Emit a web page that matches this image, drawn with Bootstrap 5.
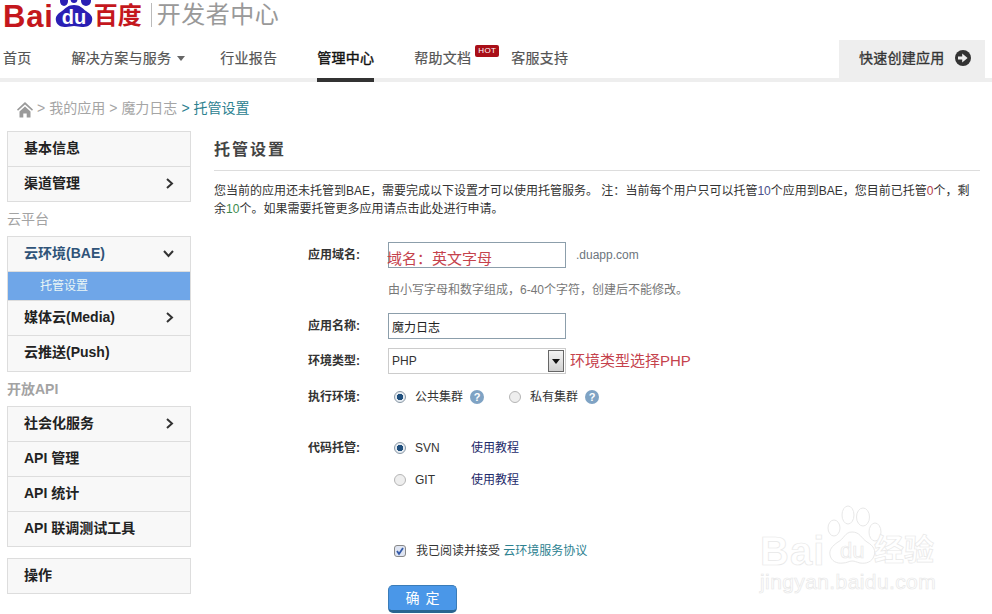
<!DOCTYPE html>
<html lang="zh-CN">
<head>
<meta charset="UTF-8" />
<title>托管设置</title>
<link href="https://cdn.jsdelivr.net/npm/bootstrap@5.3.0/dist/css/bootstrap.min.css" rel="stylesheet" />
<style>
  body { font-family: "Liberation Sans", "Noto Sans CJK SC", sans-serif; font-size: 12px; color: #333; background: #fff; height: 614px; overflow: hidden; }
  .page-wrap { position: relative; height: 614px; overflow: hidden; }

  /* header */
  .logo-row { height: 38px; padding-left: 3px; overflow: hidden; }
  .logo-bai { font-size: 31px; font-weight: 700; color: #c4171d; line-height: 30px; letter-spacing: .8px; margin-top: 2px; }
  .logo-paw { flex: none; margin-left: 1px; }
  .logo-bd { font-size: 24px; font-weight: 700; color: #c4171d; line-height: 30px; margin-top: 1px; }
  .logo-sep { width: 1px; height: 24px; background: #bbb; margin: 3px 5px 0 9px; }
  .logo-title { font-size: 24px; color: #999; line-height: 30px; letter-spacing: .5px; }
  .top-nav { height: 44px; border-bottom: 4px solid #eee; padding-left: 3px; }
  .top-link { position: relative; display: block; height: 44px; margin-right: 40px; padding-top: 10px; font-size: 14px; line-height: 20px; letter-spacing: .25px; color: #555; text-decoration: none; -webkit-text-stroke: .2px; }
  .top-link.on { color: #111; border-bottom: 4px solid #333; -webkit-text-stroke: .4px; }
  .top-caret { display: inline-block; margin-left: 6px; margin-right: -5px; vertical-align: 2px; border-top: 5px solid #666; border-left: 4.5px solid transparent; border-right: 4.5px solid transparent; }
  .hot-tag { position: absolute; left: 61px; top: 7px; width: 24px; height: 12px; background: #a90f18; border-radius: 2px; color: #fff; font-size: 8px; line-height: 12px; text-align: center; letter-spacing: .3px; -webkit-text-stroke: 0; }
  .quick-btn { width: 146px; height: 42px; margin-top: 2px; margin-right: 7px; padding: 0 0 6px 20px; background: #eee; color: #333; font-size: 14px; letter-spacing: .25px; gap: 10px; text-decoration: none; -webkit-text-stroke: .3px; }
  .crumbs { height: 49px; padding: 15px 0 0 17px; font-size: 14px; line-height: 22px; color: #a5a5a5; gap: 4px; }
  .crumb-now { color: #2c8190; }

  /* sidebar */
  .side-col { width: 184px; margin-left: 7px; flex: none; }
  .side-group { border-radius: 0; --bs-list-group-border-color: #ddd; --bs-list-group-bg: #f8f8f8; }
  .side-item { height: 35px; padding: 0 16px 2px; font-size: 14px; font-weight: 700; color: #222; }
  .side-item:first-child, .side-item.tail { height: 36px; }
  .side-item.open { color: #2f5378; }
  .side-sub { height: 29px; padding: 0 0 0 32px; background: #6fa6e8; color: #eaf6f6; font-size: 12px; }
  .side-head { height: 34px; font-size: 14px; line-height: 34px; color: #a3a3a3; }
  .side-head b { font-weight: 700; }
  .side-last { margin-top: 11px; }

  /* content */
  .main-col { width: 766px; margin-left: 23px; flex: none; }
  .main-title { height: 40px; margin: 0; font-size: 16px; font-weight: 700; line-height: 38px; letter-spacing: 2px; color: #444; border-bottom: 1px solid #ddd; }
  .main-intro { margin: 11px 0 24px; line-height: 18px; color: #333; }
  .zh-tc { font-family: "Liberation Sans", "Noto Sans CJK TC", sans-serif; }
  .c-blue { color: #4a4f8a; } .c-red { color: #b5404a; } .c-green { color: #3c8a4c; }
  .form-line { display: flex; align-items: center; padding-left: 94px; }
  .line-hint { margin-top: 12px; height: 20px; color: #777; }
  .line-name { margin-top: 13px; }
  .line-type { margin-top: 9px; }
  .line-run { margin-top: 14px; height: 18px; }
  .line-svn { margin-top: 33px; height: 18px; }
  .line-git { margin-top: 14px; height: 18px; }
  .line-agree { margin-top: 53px; height: 18px; }
  .line-ok { margin-top: 25px; }
  .form-name { width: 80px; flex: none; font-weight: 700; color: #333; }
  .txt-box { width: 178px; height: 26px; padding: 0 3px; border: 1px solid #8c9eab; border-radius: 0; font-size: 12px; color: #222; font-family: inherit; }
  .sel-box { width: 178px; height: 26px; padding: 0 3px; border: 1px solid #ccc; border-radius: 0; font-size: 12px; color: #333; font-family: inherit; background-position: right 1px center; background-size: 16px 22px;
    background-image: url("data:image/svg+xml,%3Csvg xmlns='http://www.w3.org/2000/svg' width='16' height='22'%3E%3Cdefs%3E%3ClinearGradient id='g' x2='0' y2='1'%3E%3Cstop stop-color='%23f4f4f4'/%3E%3Cstop offset='1' stop-color='%23cfcfcf'/%3E%3C/linearGradient%3E%3C/defs%3E%3Crect x='.5' y='.5' width='15' height='21' fill='url(%23g)' stroke='%23666'/%3E%3Cpath d='M4 9h8l-4 5z' fill='%23111'/%3E%3C/svg%3E"); }
  .box-wrap { position: relative; }
  .red-note { color: #c5424c; font-size: 15px; font-family: "Liberation Sans", "Noto Sans CJK TC", sans-serif; }
  .box-note { position: absolute; left: -1px; top: 7px; line-height: 20px; white-space: nowrap; }
  .dom-tail { margin-left: 10px; color: #6c757d; }
  .radio-dot { width: 12px; height: 12px; margin: 0 0 0 6px; border: 1px solid #b5b5b5; background-color: #eee; flex: none; }
  .radio-dot.next { margin-left: 25px; }
  .radio-dot:checked { border-color: #8a98a5; background-color: #e6ecf2; background-image: radial-gradient(circle, #1f4f7d 0 3px, transparent 3.5px); }
  .radio-txt { margin-left: 9px; }
  .radio-wide { width: 56px; }
  .help-dot { width: 14px; height: 14px; margin-left: 7px; border-radius: 50%; background: #7fa3c4; color: #fff; font-size: 11px; font-weight: 700; line-height: 14px; text-align: center; }
  .tut-link { color: #1d2a6a; text-decoration: none; }
  .tick-box { width: 12px; height: 12px; margin: 0 0 0 6px; border: 1px solid #888; border-radius: 0; flex: none; }
  .tick-box:checked { border-color: #888; background-color: #dfe5f2; background-size: 10px 10px;
    background-image: url("data:image/svg+xml,%3Csvg xmlns='http://www.w3.org/2000/svg' viewBox='0 0 10 10'%3E%3Cpath d='M2 5l2 3 4-6' fill='none' stroke='%23345aa8' stroke-width='1.8'/%3E%3C/svg%3E"); }
  .agree-txt { margin-left: 10px; }
  .agree-link { color: #2c8190; text-decoration: none; }
  .ok-btn { width: 69px; height: 28px; padding: 0; font-size: 14px; line-height: 24px; letter-spacing: 6px; text-indent: 6px; color: #fff; background: #4a97e8; border: 1px solid #3a7cb8; border-bottom: 3px solid #2a6590; border-radius: 5px; }

  /* watermark */
  .mark-wrap { position: absolute; left: 760px; top: 504px; width: 180px; height: 90px; color: #fff; -webkit-text-stroke: .7px #e8e8e8; pointer-events: none; }
  .mark-paw { position: absolute; left: 62px; top: 0; }
  .mark-bai { position: absolute; left: 0; top: 24px; font-size: 40px; font-weight: 700; line-height: 46px; letter-spacing: 1px; }
  .mark-du { position: absolute; left: 80px; top: 34px; font-size: 22px; line-height: 26px; }
  .mark-jy { position: absolute; left: 114px; top: 28px; font-size: 30px; font-weight: 700; line-height: 36px; white-space: nowrap; }
  .mark-url { position: absolute; left: 0; top: 65px; font-size: 21px; line-height: 26px; white-space: nowrap; letter-spacing: .4px; }
</style>
</head>
<body>
<div class="page-wrap">
  <div class="logo-row d-flex align-items-start">
    <span class="logo-bai">Bai</span>
    <svg class="logo-paw" width="39" height="30" viewBox="0 0 39 30">
      <ellipse cx="9" cy="1" rx="4" ry="5" fill="#2a1fb4"/>
      <ellipse cx="19" cy="-1" rx="3.500" ry="4" fill="#2a1fb4"/>
      <ellipse cx="31" cy="1" rx="5" ry="5" fill="#2a1fb4"/>
      <path d="M19 5c6 0 8 3 12 6 5 3 7 6 6 10-1 5-6 6-10 6-3 0-5-1-8-1s-5 1-8 1c-4 0-9-1-10-6-1-4 1-7 6-10 4-3 6-6 12-6z" fill="#2a1fb4"/>
      <text x="19" y="24" text-anchor="middle" font-size="20" font-weight="700" fill="#fff" font-family="Liberation Sans">du</text>
    </svg>
    <span class="logo-bd">百度</span>
    <span class="logo-sep"></span>
    <span class="logo-title">开发者中心</span>
  </div>

  <div class="top-nav d-flex">
    <a class="top-link" href="#">首页</a>
    <a class="top-link" href="#">解决方案与服务<span class="top-caret"></span></a>
    <a class="top-link" href="#">行业报告</a>
    <a class="top-link on" href="#">管理中心</a>
    <a class="top-link" href="#">帮助文档<span class="hot-tag">HOT</span></a>
    <a class="top-link" href="#">客服支持</a>
    <a class="quick-btn ms-auto d-flex align-items-center" href="#">快速创建应用
      <svg width="16" height="16" viewBox="0 0 16 16"><circle cx="8" cy="8" r="8" fill="#333"/><path d="M3 6.600h4.200V3.600L12.600 8l-5.400 4.400V9.400H3z" fill="#eee"/></svg>
    </a>
  </div>

  <div class="crumbs d-flex">
    <svg width="16" height="17" viewBox="0 0 16 17" class="mt-1"><path d="M8 1 0 8.500l1 1.200L8 3.400l7 6.300 1-1.200zM2.500 10.500 8 5.500l5.500 5V16.500H9.700v-4H6.300v4H2.500z" fill="#9a9a9a"/></svg>
    <span>&gt;</span><span>我的应用</span><span>&gt;</span><span>魔力日志</span><span class="crumb-now">&gt;</span><span class="crumb-now">托管设置</span>
  </div>

  <div class="d-flex">
    <div class="side-col">
      <div class="list-group side-group">
        <a class="list-group-item side-item d-flex align-items-center" href="#">基本信息</a>
        <a class="list-group-item side-item d-flex align-items-center justify-content-between" href="#">渠道管理
          <svg width="9" height="11" viewBox="0 0 9 11"><path d="M2 1l5 4.500-5 4.500" fill="none" stroke="#333" stroke-width="2"/></svg></a>
      </div>
      <div class="side-head">云平台</div>
      <div class="list-group side-group">
        <a class="list-group-item side-item open d-flex align-items-center justify-content-between" href="#">云环境(BAE)
          <svg width="11" height="9" viewBox="0 0 11 9"><path d="M1 2l4.500 5 4.500-5" fill="none" stroke="#333" stroke-width="2"/></svg></a>
        <a class="list-group-item side-sub d-flex align-items-center" href="#">托管设置</a>
        <a class="list-group-item side-item d-flex align-items-center justify-content-between" href="#">媒体云(Media)
          <svg width="9" height="11" viewBox="0 0 9 11"><path d="M2 1l5 4.500-5 4.500" fill="none" stroke="#333" stroke-width="2"/></svg></a>
        <a class="list-group-item side-item tail d-flex align-items-center" href="#">云推送(Push)</a>
      </div>
      <div class="side-head"><b>开放API</b></div>
      <div class="list-group side-group">
        <a class="list-group-item side-item d-flex align-items-center justify-content-between" href="#">社会化服务
          <svg width="9" height="11" viewBox="0 0 9 11"><path d="M2 1l5 4.500-5 4.500" fill="none" stroke="#333" stroke-width="2"/></svg></a>
        <a class="list-group-item side-item d-flex align-items-center" href="#">API 管理</a>
        <a class="list-group-item side-item d-flex align-items-center" href="#">API 统计</a>
        <a class="list-group-item side-item d-flex align-items-center" href="#">API 联调测试工具</a>
      </div>
      <div class="list-group side-group side-last">
        <a class="list-group-item side-item d-flex align-items-center" href="#">操作</a>
      </div>
    </div>

    <div class="main-col">
      <h2 class="main-title">托管设置</h2>
      <p class="main-intro">您当前的应用还未托管到BAE，需要完成以下设置才可以使用托管服务。 <span class="zh-tc">注：</span>当前每个用户只可以托管<span class="c-blue">10</span>个应用到BAE，您目前已托管<span class="c-red">0</span>个，剩余<span class="c-green">10</span>个。如果需要托管更多应用请点击此处进行申请。</p>

      <div class="form-line">
        <span class="form-name">应用域名:</span>
        <div class="box-wrap">
          <input class="txt-box d-block" type="text" />
          <span class="red-note box-note">域名：英文字母</span>
        </div>
        <span class="dom-tail">.duapp.com</span>
      </div>
      <div class="form-line line-hint">
        <span class="form-name"></span>
        <span>由小写字母和数字组成，6-40个字符，创建后不能修改。</span>
      </div>
      <div class="form-line line-name">
        <span class="form-name">应用名称:</span>
        <input class="txt-box" type="text" value="魔力日志" />
      </div>
      <div class="form-line line-type">
        <span class="form-name">环境类型:</span>
        <select class="form-select sel-box"><option>PHP</option></select>
        <span class="red-note ms-1">环境类型选择PHP</span>
      </div>
      <div class="form-line line-run">
        <span class="form-name">执行环境:</span>
        <input class="form-check-input radio-dot" type="radio" name="envtype" checked />
        <span class="radio-txt">公共集群</span>
        <span class="help-dot">?</span>
        <input class="form-check-input radio-dot next" type="radio" name="envtype" />
        <span class="radio-txt">私有集群</span>
        <span class="help-dot">?</span>
      </div>
      <div class="form-line line-svn">
        <span class="form-name">代码托管:</span>
        <input class="form-check-input radio-dot" type="radio" name="repo" checked />
        <span class="radio-txt radio-wide">SVN</span>
        <a class="tut-link" href="#">使用教程</a>
      </div>
      <div class="form-line line-git">
        <span class="form-name"></span>
        <input class="form-check-input radio-dot" type="radio" name="repo" />
        <span class="radio-txt radio-wide">GIT</span>
        <a class="tut-link" href="#">使用教程</a>
      </div>
      <div class="form-line line-agree">
        <span class="form-name"></span>
        <input class="form-check-input tick-box" type="checkbox" checked />
        <span class="agree-txt">我已阅读并接受 <a class="agree-link" href="#">云环境服务协议</a></span>
      </div>
      <div class="form-line line-ok">
        <span class="form-name"></span>
        <button class="btn btn-primary ok-btn" type="button">确定</button>
      </div>
    </div>
  </div>

  <div class="mark-wrap">
    <svg class="mark-paw" width="60" height="62" viewBox="0 0 60 62" fill="#fff" stroke="#e8e8e8" stroke-width="1">
      <ellipse cx="12" cy="24" rx="6" ry="8"/><ellipse cx="26" cy="11" rx="6" ry="9"/><ellipse cx="41" cy="13" rx="6.500" ry="9"/><ellipse cx="53" cy="28" rx="6" ry="9"/>
      <path d="M30 28c8 0 9 6 15 10 7 4 9 9 7 14-2 6-8 8-14 7-4-1-5-2-8-2s-5 2-9 2c-6 1-12-2-13-8-1-5 2-9 8-13 6-3 7-10 14-10z"/>
    </svg>
    <span class="mark-bai">Bai</span>
    <span class="mark-du">du</span>
    <span class="mark-jy">经验</span>
    <span class="mark-url">jingyan.baidu.com</span>
  </div>
</div>
<script src="https://cdn.jsdelivr.net/npm/bootstrap@5.3.0/dist/js/bootstrap.bundle.min.js"></script>
</body>
</html>
